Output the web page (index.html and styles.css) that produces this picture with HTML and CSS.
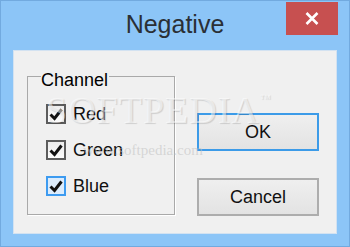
FILE: index.html
```html
<!DOCTYPE html>
<html lang="en">
<head>
    <meta charset="UTF-8">
    <title>Negative</title>
    <link rel="stylesheet" href="styles.css">
</head>
<body>

    <div class="window">
        <div class="titlebar">
            <div></div>
            <div class="title">Negative</div>
            <button type="button" class="close" title="Close">
                <svg width="14" height="13" viewBox="0 0 14 13">
                    <path d="M1.5 1 L12.5 12 M12.5 1 L1.5 12" stroke="#fff" stroke-width="2.6" fill="none"/>
                </svg>
            </button>
        </div>

        <div class="client">
            <div class="group">
                <span class="legend">Channel</span>

                <label class="check">
                    <span class="box">
                        <svg width="16" height="16" viewBox="0 0 16 16"><path d="M2.5 8.5 L6.5 12.5 L13.5 3.5" stroke="#111" stroke-width="3" fill="none"/></svg>
                    </span>
                    Red
                </label>
                <label class="check">
                    <span class="box">
                        <svg width="16" height="16" viewBox="0 0 16 16"><path d="M2.5 8.5 L6.5 12.5 L13.5 3.5" stroke="#111" stroke-width="3" fill="none"/></svg>
                    </span>
                    Green
                </label>
                <label class="check">
                    <span class="box focus">
                        <svg width="16" height="16" viewBox="0 0 16 16"><path d="M2.5 8.5 L6.5 12.5 L13.5 3.5" stroke="#111" stroke-width="3" fill="none"/></svg>
                    </span>
                    Blue
                </label>
            </div>

            <div class="buttons">
                <button type="button" class="btn default">OK</button>
                <button type="button" class="btn">Cancel</button>
            </div>

            <!-- watermark from the source screenshot -->
            <div class="mark">SOFTPEDIA<sup>™</sup></div>
            <div class="mark-url">www.softpedia.com</div>
        </div>
    </div>

</body>
</html>
```

FILE: styles.css
```css
body {
    margin: 0;
    padding: 0;
    font-family: "Liberation Sans", Arial, sans-serif;
}

.window {
    width: 350px;
    height: 247px;
    box-sizing: border-box;
    background-color: #8cc5f7;
    border: 1px solid #72aadf;
}

.titlebar {
    height: 49px;
    display: grid;
    grid-template-columns: 1fr auto 1fr;
}

.title {
    padding-top: 9px;
    font-size: 25px;
    line-height: 28px;
    color: #2a2f35;
}

.close {
    justify-self: end;
    align-self: start;
    width: 52px;
    height: 33px;
    margin: 1px 11px 0 0;
    padding: 0;
    border: none;
    background-color: #c75050;
    display: flex;
    align-items: center;
    justify-content: center;
}

.client {
    position: relative;
    width: 324px;
    height: 184px;
    margin-left: 12px;
    box-sizing: border-box;
    background-color: #f0f0f0;
    border: 1px solid #d3e2f1;
    padding: 25px 0 0 13px;
    display: flex;
    align-items: flex-start;
}

.group {
    position: relative;
    width: 148px;
    height: 139px;
    box-sizing: border-box;
    border: 1px solid #a9a9a9;
    box-shadow: 1px 1px 0 #fff;
    padding: 27px 0 0 18px;
    display: flex;
    flex-direction: column;
    gap: 16px;
}

.legend {
    position: absolute;
    left: 13px;
    top: -7px;
    padding: 0 1px 0 0;
    background-color: #f0f0f0;
    font-size: 18px;
    line-height: 20px;
}

.check {
    display: flex;
    align-items: center;
    gap: 7px;
    height: 20px;
    font-size: 18px;
    line-height: 20px;
    color: #111;
}

.box {
    width: 20px;
    height: 20px;
    box-sizing: border-box;
    border: 2px solid #5c5c5c;
    background: linear-gradient(#ececec, #fcfcfc);
    display: flex;
    align-items: center;
    justify-content: center;
}

.box.focus {
    border-color: #3d9bf0;
    background: #dcecfc;
}

.buttons {
    margin: 37px 0 0 22px;
    display: flex;
    flex-direction: column;
    gap: 27px;
}

.btn {
    width: 122px;
    height: 38px;
    box-sizing: border-box;
    padding: 0;
    font-family: "Liberation Sans", Arial, sans-serif;
    font-size: 18px;
    color: #111;
    border: 2px solid #adadad;
    background: linear-gradient(#efefef, #e3e3e3);
}

.btn.default {
    border-color: #3c9be8;
}

.mark {
    position: absolute;
    left: 32px;
    top: 40px;
    font-family: "Liberation Serif", serif;
    font-size: 38px;
    line-height: 38px;
    letter-spacing: 1px;
    color: rgba(255, 255, 255, 0.55);
    text-shadow: 1px 1px 1px rgba(0, 0, 0, 0.14);
    pointer-events: none;
}

.mark sup {
    font-size: 11px;
    vertical-align: top;
    line-height: 14px;
}

.mark-url {
    position: absolute;
    left: 69px;
    top: 91px;
    font-family: "Liberation Serif", serif;
    font-size: 15px;
    line-height: 16px;
    color: rgba(190, 190, 190, 0.55);
    pointer-events: none;
}
```
